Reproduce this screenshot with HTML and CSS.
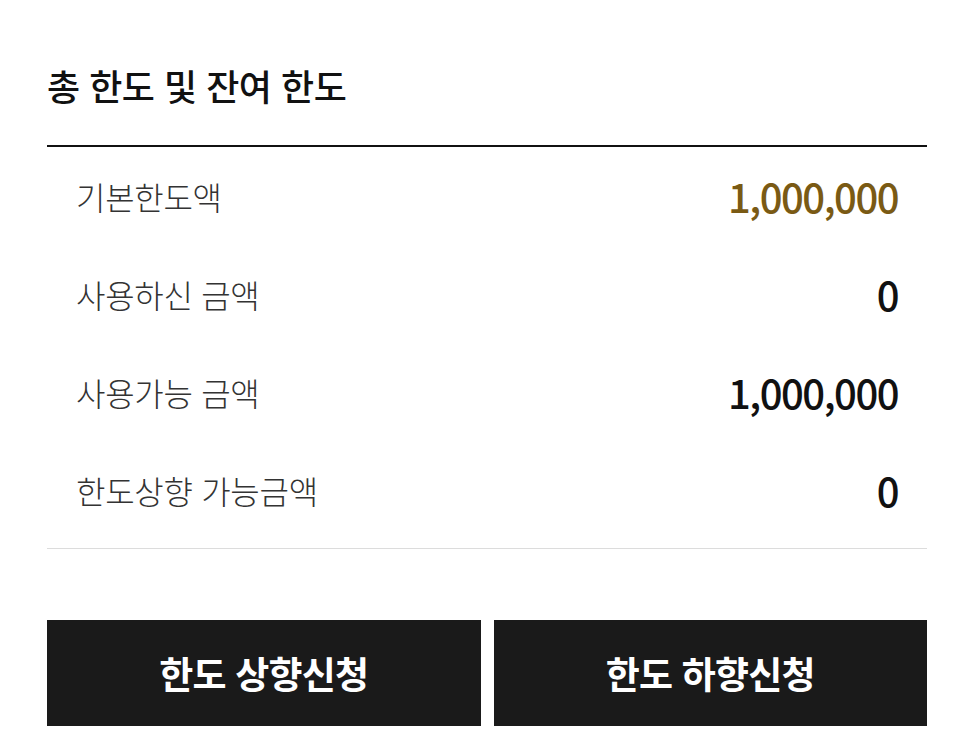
FILE: index.html
```html
<!DOCTYPE html>
<html lang="ko">
<head>
<meta charset="utf-8">
<title>총 한도 및 잔여 한도</title>
<link rel="stylesheet" href="styles.css">
</head>
<body>
<div class="page">
  <h2 class="title">총 한도 및 잔여 한도</h2>
  <div class="table">
    <div class="row"><span class="label">기본한도액</span><span class="value gold">1,000,000</span></div>
    <div class="row"><span class="label">사용하신 금액</span><span class="value">0</span></div>
    <div class="row"><span class="label">사용가능 금액</span><span class="value">1,000,000</span></div>
    <div class="row"><span class="label">한도상향 가능금액</span><span class="value">0</span></div>
  </div>
  <div class="buttons">
    <button class="btn">한도 상향신청</button>
    <button class="btn">한도 하향신청</button>
  </div>
</div>
</body>
</html>
```

FILE: styles.css
```css
html, body {
  margin: 0;
  padding: 0;
  background: #fff;
}
body {
  font-family: "Noto Sans CJK KR", "Noto Sans", sans-serif;
  color: #111;
}
.page {
  padding: 65px 48px 0 47px;
}
.title {
  margin: 0 0 40px 0;
  font-size: 36px;
  line-height: 40px;
  font-weight: 500;
  color: #111;
  letter-spacing: -0.5px;
}
.table {
  border-top: 2px solid #111;
  border-bottom: 1px solid #dcdcdc;
  padding: 0 0 9px 0;
}
.row {
  height: 98px;
  display: flex;
  align-items: center;
  justify-content: space-between;
  padding: 0 29px;
}
.label {
  font-size: 32px;
  font-weight: 300;
  color: #333;
  letter-spacing: -0.3px;
}
.value {
  font-size: 40px;
  font-weight: 500;
  letter-spacing: -1.5px;
  color: #111;
}
.value.gold {
  color: #7a5a14;
}
.buttons {
  margin-top: 71px;
  display: grid;
  grid-template-columns: 1fr 1fr;
  gap: 13px;
}
.btn {
  height: 106px;
  border: 0;
  background: #1a1a1a;
  color: #fff;
  font-family: "Noto Sans CJK KR", "Noto Sans", sans-serif;
  font-size: 37px;
  font-weight: 700;
  letter-spacing: -0.8px;
  padding: 0;
}
```
